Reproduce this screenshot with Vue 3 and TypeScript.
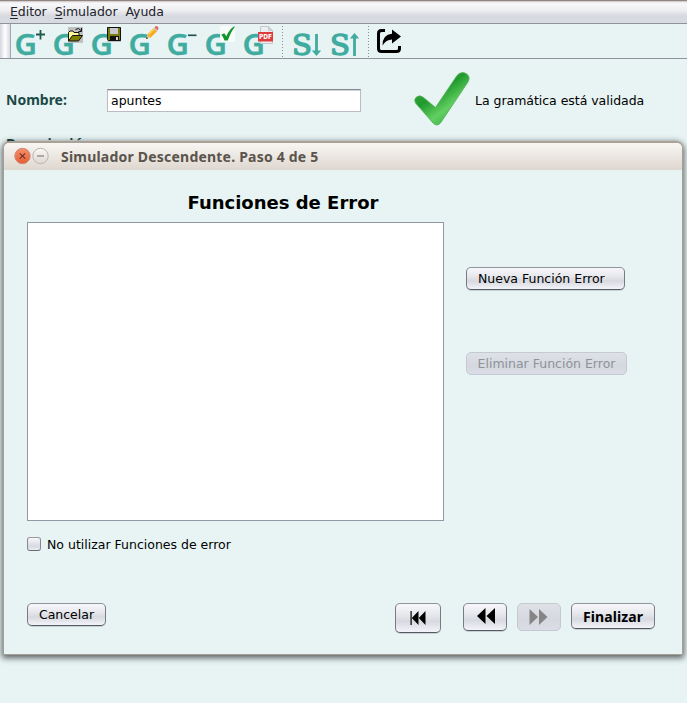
<script setup lang="ts">
import { ref } from 'vue'

type Badge = 'plus' | 'open' | 'save' | 'edit' | 'minus' | 'check' | 'pdf'

const badges: Badge[] = ['plus', 'open', 'save', 'edit', 'minus', 'check', 'pdf']
const menus: string[] = ['Editor', 'Simulador', 'Ayuda']
const nombre = ref('apuntes')
const sinFunciones = ref(false)
</script>

<template>
  <div class="screen">
    <nav class="menubar">
      <span v-for="(m, i) in menus" :key="m" class="menu"><template v-if="i < 2"><u>{{ m[0] }}</u>{{ m.slice(1) }}</template><template v-else>{{ m }}</template></span>
    </nav>

    <div class="toolbar">
      <div class="grip"></div>
      <svg v-for="b in badges" :key="b" class="tool" width="38" height="34" viewBox="0 0 38 34">
        <text class="g" x="0.600" y="31.200" textLength="22.500" lengthAdjust="spacingAndGlyphs">G</text>
        <path v-if="b === 'plus'" d="M22 10.500h9M26.500 6v9.500" stroke="#22564f" stroke-width="1.800" />
        <g v-else-if="b === 'open'">
          <rect x="16" y="3" width="15" height="16" fill="#c0c0c0" />
          <path d="M16.500 17V8.500l1.500-1.500h3l1 1.500h5V11" fill="#fff99a" stroke="#111" />
          <path d="M16.500 17l4-5.500h10l-4 5.500z" fill="#808000" stroke="#111" />
          <path d="M23.500 5.500q3-2.500 5.500 1M29.500 4v3.500h-3" fill="none" stroke="#111" />
        </g>
        <g v-else-if="b === 'save'">
          <rect x="17" y="3" width="14" height="15" fill="#c0c0c0" />
          <path d="M17.500 3.500h13v13h-12l-1-1z" fill="#777b10" stroke="#111" />
          <rect x="20" y="4" width="8" height="6" fill="#c8c8c8" />
          <rect x="20" y="12" width="9" height="5" fill="#111" />
          <rect x="26" y="13" width="2" height="3" fill="#d0d0d0" />
        </g>
        <g v-else-if="b === 'edit'">
          <path d="M18 15l1.500-4.500 3 3z" fill="#e8c79a" />
          <path d="M19.200 10.500L26 3.700l3.300 3.300-6.800 6.800z" fill="#f8a91f" />
          <path d="M20.500 10.500L26.500 4.500" stroke="#ffd34f" stroke-width="1.400" />
          <path d="M25.500 4.500l1-1 3 3-1 1z" fill="#c9cdd0" />
          <path d="M26.500 3.500l1-1.200q1.500-.6 2.500.7t.2 2.300l-.8 1.100z" fill="#e06a6d" />
          <path d="M18 15l.8-2.200 1.400 1.400z" fill="#333" />
        </g>
        <path v-else-if="b === 'minus'" d="M22 11.300h8.500" stroke="#22564f" stroke-width="1.700" />
        <g v-else-if="b === 'check'">
          <rect x="16" y="2" width="15" height="16" fill="#f7fbfa" />
          <path d="M17.300 10.800l3-1.500 2 3Q25 5.500 30.300 2.200l.5.800Q27 7.500 23.800 16.500h-3.300Q19.500 13 17.300 10.800z" fill="#12962c" />
        </g>
        <g v-else>
          <path d="M18.500 2.500h8l4 4v13h-12z" fill="#eceeef" stroke="#c3c9cb" />
          <path d="M26.500 2.500v4h4z" fill="#d2d6d8" stroke="#b9bfc2" stroke-width=".6" />
          <rect x="16" y="8" width="15" height="9.500" fill="#dc3c3e" />
          <text class="pdf" x="17" y="15.200" textLength="13" lengthAdjust="spacingAndGlyphs">PDF</text>
        </g>
      </svg>
      <div class="sep"></div>
      <svg class="tool s-down" width="38" height="34" viewBox="0 0 38 34">
        <text class="s" x="1" y="31" textLength="20" lengthAdjust="spacingAndGlyphs">S</text>
        <path d="M25.500 10v17" stroke="#40aca0" stroke-width="2.800" />
        <path d="M20.800 26.500h9.400L25.500 32z" fill="#40aca0" />
      </svg>
      <svg class="tool" width="38" height="34" viewBox="0 0 38 34">
        <text class="s" x="1" y="31" textLength="20" lengthAdjust="spacingAndGlyphs">S</text>
        <path d="M25.500 14v18" stroke="#40aca0" stroke-width="2.800" />
        <path d="M20.800 14.500h9.400L25.500 9z" fill="#40aca0" />
      </svg>
      <div class="sep second"></div>
      <svg class="share" width="26" height="34" viewBox="0 0 26 34">
        <path d="M9 6.500H5.500q-3 0-3 3v15q0 3 3 3h15q3 0 3-3V22" fill="none" stroke="#000" stroke-width="3" />
        <path d="M16 5.500l9 7-9 7v-4q-6 0-9.500 6Q6.500 10.500 16 9.800z" fill="#000" />
      </svg>
    </div>

    <main class="form">
      <div class="row">
        <label class="nombre" for="nombre">Nombre:</label>
        <input id="nombre" v-model="nombre" type="text" />
        <svg class="valid" width="58" height="58" viewBox="0 0 58 58">
          <defs>
            <linearGradient id="tick" x1="0" y1="0" x2=".75" y2="1">
              <stop offset="0" stop-color="#46ad4d" />
              <stop offset=".45" stop-color="#219a2d" />
              <stop offset=".72" stop-color="#62cf61" />
              <stop offset="1" stop-color="#34aa3d" />
            </linearGradient>
          </defs>
          <path d="M2.500 32Q.5 28.500 3.500 26q3.500-2.500 7 .5L22.500 36.500 44 4.500Q48 0 53 2.500q5 3 2 8.500L27.500 52q-3.500 4-7.500 0z" fill="url(#tick)" stroke="#51ae57" stroke-width=".8" />
        </svg>
        <span class="msg">La gramática está validada</span>
      </div>
      <label class="descripcion">Descripción:</label>
    </main>

    <section class="dialog">
      <header class="title">
        <svg width="38" height="20" viewBox="0 0 38 20">
          <defs>
            <linearGradient id="close" x2="0" y2="1"><stop stop-color="#f8906b" /><stop offset="1" stop-color="#e95b32" /></linearGradient>
            <linearGradient id="mini" x2="0" y2="1"><stop stop-color="#faf9f7" /><stop offset="1" stop-color="#dcd7d0" /></linearGradient>
          </defs>
          <circle cx="10.500" cy="10" r="7.700" fill="url(#close)" stroke="#c98b74" />
          <path d="M7.800 7.300l5.400 5.400M13.200 7.300l-5.400 5.400" stroke="#66392a" stroke-width="1.200" />
          <circle cx="28.500" cy="10" r="7.700" fill="url(#mini)" stroke="#bdb5ad" />
          <path d="M25 10h7" stroke="#7d756d" stroke-width="1.100" />
        </svg>
        <span>Simulador Descendente. Paso 4 de 5</span>
      </header>
      <div class="body">
        <h1>Funciones de Error</h1>
        <div class="columns">
          <div class="list"></div>
          <div class="actions">
            <button class="btn nueva">Nueva Función Error</button>
            <button class="btn eliminar" disabled>Eliminar Función Error</button>
          </div>
        </div>
        <label class="check"><input v-model="sinFunciones" type="checkbox" /><span>No utilizar Funciones de error</span></label>
        <footer>
          <button class="btn cancel">Cancelar</button>
          <button class="btn first" aria-label="Primero">
            <svg width="16" height="16" viewBox="0 0 16 16"><path d="M.5 1h1.200v14H.5zM8.500 1v14L1.800 8zM15.500 1v14L8.800 8z" /></svg>
          </button>
          <button class="btn prev" aria-label="Anterior">
            <svg width="18" height="16" viewBox="0 0 18 16"><path d="M8.500 0v16L0 8zM18 0v16L9.500 8z" /></svg>
          </button>
          <button class="btn next" disabled aria-label="Siguiente">
            <svg width="19" height="16" viewBox="0 0 19 16"><path d="M.5 0v16L9 8zM10 0v16l8.500-8z" /></svg>
          </button>
          <button class="btn end">Finalizar</button>
        </footer>
      </div>
    </section>
  </div>
</template>

<style>
body { margin: 0; overflow: hidden; background: #e8f4f4; }
</style>

<style scoped>
* { box-sizing: border-box; }
.screen { position: relative; width: 687px; height: 703px; overflow: hidden; background: #e8f4f4; font: 13px "DejaVu Sans", sans-serif; color: #000; }
.menubar { display: flex; gap: 8px; height: 24px; padding: 3px 0 0 10px; border-top: 1px solid #91867e; border-bottom: 1px solid #8e939e; background: linear-gradient(#c9c4c4 0, #f9f9fb 2px, #eeeff2 9px, #d6d9df 15px, #d8dbe2 22px); color: #23232b; line-height: 16px; white-space: nowrap; }
.menu { font-size: 12.500px; letter-spacing: -.06px; }
.menu u { text-underline-offset: 2px; }
.toolbar { display: flex; height: 35px; border-bottom: 1px solid #8e939e; }
.grip { width: 11px; margin-right: 3px; border-right: 1px solid #a4a8b4; background: linear-gradient(90deg, #d5d7df, #fff 5px, #d8dae2); }
.tool { flex: none; display: block; overflow: visible; }
.g { font: 600 29.500px "Noto Sans", sans-serif; fill: #40aca0; stroke: #40aca0; stroke-width: .3; }
.s { font: 28px "DejaVu Serif", serif; fill: #40aca0; stroke: #40aca0; stroke-width: 1.400; }
.pdf { font: bold 7px "DejaVu Sans", sans-serif; fill: #fff; }
.sep { width: 1px; height: 32px; margin: 2px 0 0 2px; background: repeating-linear-gradient(#87909a 0 1px, transparent 1px 3px); }
.s-down { margin-left: 8px; }
.sep.second { margin-left: 1px; }
.share { margin-left: 7px; }
.form { padding: 12px 0 0 6px; }
.row { display: flex; align-items: center; height: 58px; }
.nombre, .descripcion { font: bold 14px "Noto Sans", sans-serif; color: #1b4945; }
.nombre { width: 101px; margin-top: -2px; }
#nombre { width: 254px; height: 23px; padding: 0 3px; border: 1px solid #b9bcc3; border-top: 1px solid #858991; box-shadow: inset 0 1px #d3d5d9; background: #fff; font: 12.500px "DejaVu Sans", sans-serif; outline: none; border-radius: 0; }
.valid { margin-left: 52px; }
.msg { margin-left: 4px; white-space: nowrap; font-size: 12.500px; letter-spacing: -.03px; }
.descripcion { display: block; margin-top: 5px; line-height: 20px; letter-spacing: .5px; }
.dialog { position: absolute; left: 3px; top: 141px; width: 680px; height: 514px; border: 1px solid #a69f95; border-top: 2px solid #aca196; border-radius: 7px 7px 0 0; background: #e8f4f4; box-shadow: 0 2px 6px 1px rgba(0, 0, 0, .62); overflow: visible; }
.title { display: flex; align-items: center; height: 27px; padding: 0 0 1px 8px; border-radius: 5px 5px 0 0; background: linear-gradient(#f8f6f3, #ded7cf); font: bold 14px "Noto Sans", sans-serif; color: #5b544c; white-space: nowrap; }
.title span { margin-left: 11px; letter-spacing: .21px; }
.body { padding: 21px 0 0 23px; }
h1 { margin: 0 0 8px 160.500px; font: bold 18px/23px "DejaVu Sans", sans-serif; white-space: nowrap; }
.columns { display: flex; gap: 22px; }
.list { width: 417px; height: 299px; border: 1px solid #9298a2; background: #fff; }
.actions { display: flex; flex-direction: column; align-items: flex-start; gap: 62px; padding-top: 45px; }
.btn { display: flex; align-items: center; justify-content: center; padding: 0; border: 1px solid; border-color: #90949d #777b83 #555961; border-radius: 5px; background: linear-gradient(#f8f8fb, #e6e7ec 40%, #d6d9df 62%, #f3f4fa); box-shadow: 0 1px #c7d1d3; font: 12.500px "DejaVu Sans", sans-serif; color: #000; white-space: nowrap; flex: none; }
.btn:disabled { color: #8e9299; background: linear-gradient(#dee1e6, #d5d8df 60%, #dcdde7); border-color: #c5c9d1; box-shadow: none; }
.btn svg { display: block; fill: #000; }
.btn:disabled svg { fill: #858585; }
.nueva { width: 159px; height: 23px; justify-content: flex-start; padding-left: 11px; }
.eliminar { width: 161px; height: 23px; }
.check { display: flex; align-items: center; height: 16px; margin-top: 15px; font-size: 12.500px; white-space: nowrap; }
.check input { appearance: none; width: 14px; height: 14px; margin: 0 6px 0 0; border: 1px solid; border-color: #979ba4 #858992 #686c74; border-radius: 3px; background: linear-gradient(#f8f8fb, #d6d9df 70%, #eeeef5); }
footer { display: flex; align-items: flex-start; margin-top: 51px; }
.cancel { width: 79px; height: 23px; }
.first { width: 46px; height: 30px; margin-left: 289px; }
.prev { width: 44px; height: 28px; margin-left: 22px; padding: 0 0 2px 2px; }
.next { width: 44px; height: 28px; margin-left: 10px; padding-right: 2px; }
.end { width: 84px; height: 26px; margin-left: 10px; font: bold 14px "Noto Sans", sans-serif; letter-spacing: .1px; }
</style>
